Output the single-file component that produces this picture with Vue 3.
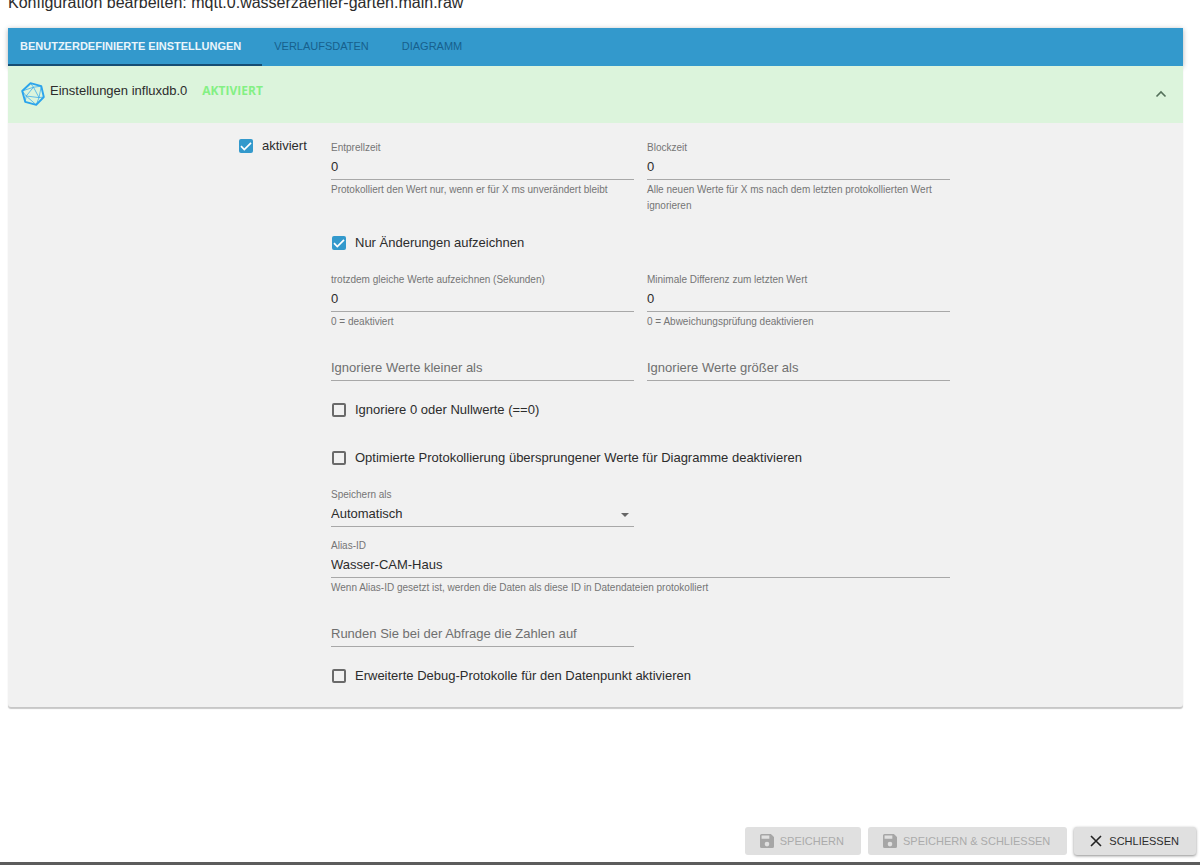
<script setup>
import { ref, reactive } from 'vue'

const tabs = ['Benutzerdefinierte Einstellungen', 'Verlaufsdaten', 'Diagramm']
const active = ref(0)
const cfg = reactive({
  enabled: true,
  debounce: '0',
  block: '0',
  changesOnly: true,
  relog: '0',
  minDiff: '0',
  below: '',
  above: '',
  ignoreZero: false,
  noSkipped: false,
  storage: 'Automatisch',
  alias: 'Wasser-CAM-Haus',
  round: '',
  debug: false,
})
</script>

<template>
  <div class="dialog">
    <header class="title"><h1>Konfiguration bearbeiten: mqtt.0.wasserzaehler-garten.main.raw</h1></header>

    <main class="content">
      <nav class="tabs" role="tablist">
        <button
          v-for="(t, i) in tabs"
          :key="t"
          type="button"
          role="tab"
          :aria-selected="active === i"
          :class="['tab', { active: active === i }]"
          @click="active = i"
        >{{ t }}</button>
      </nav>

      <section class="panel">
        <button type="button" class="summary" aria-expanded="true">
          <svg class="logo" viewBox="0 0 24 24" fill="none" stroke="#2ba4ec" stroke-linejoin="round">
            <path stroke-width="1.9" d="M9.5 1.2 20.3 4.2 22.8 15 15.2 22.8 4.2 19.8 1.2 9Z" />
            <path stroke-width="0.7" d="M12.5 5.2 18 15.6 5.2 14ZM12.5 5.2 9.5 1.2M12.5 5.2 20.3 4.2M12.5 5.2 1.2 9M18 15.6 20.3 4.2M18 15.6 22.8 15M18 15.6 15.2 22.8M5.2 14 1.2 9M5.2 14 4.2 19.8M5.2 14 15.2 22.8" />
          </svg>
          <span class="name">Einstellungen influxdb.0</span>
          <span class="state">AKTIVIERT</span>
          <svg class="chevron" viewBox="0 0 12 12" fill="none" stroke="#54705a" stroke-width="1.6">
            <path d="M1.5 8.5 6 4 10.5 8.5" />
          </svg>
        </button>

        <form class="form" @submit.prevent>
          <label class="check side"><input v-model="cfg.enabled" type="checkbox" /><span>aktiviert</span></label>

          <div class="fields">
            <div class="row first">
              <div class="field">
                <label for="debounce">Entprellzeit</label>
                <input id="debounce" v-model="cfg.debounce" type="text" />
                <p>Protokolliert den Wert nur, wenn er für X ms unverändert bleibt</p>
              </div>
              <div class="field">
                <label for="block">Blockzeit</label>
                <input id="block" v-model="cfg.block" type="text" />
                <p>Alle neuen Werte für X ms nach dem letzten protokollierten Wert ignorieren</p>
              </div>
            </div>

            <label class="check"><input v-model="cfg.changesOnly" type="checkbox" /><span>Nur Änderungen aufzeichnen</span></label>

            <div class="row">
              <div class="field">
                <label for="relog">trotzdem gleiche Werte aufzeichnen (Sekunden)</label>
                <input id="relog" v-model="cfg.relog" type="text" />
                <p>0 = deaktiviert</p>
              </div>
              <div class="field">
                <label for="mindiff">Minimale Differenz zum letzten Wert</label>
                <input id="mindiff" v-model="cfg.minDiff" type="text" />
                <p>0 = Abweichungsprüfung deaktivieren</p>
              </div>
            </div>

            <div class="row">
              <div class="field bare">
                <input v-model="cfg.below" type="text" placeholder="Ignoriere Werte kleiner als" aria-label="Ignoriere Werte kleiner als" />
              </div>
              <div class="field bare">
                <input v-model="cfg.above" type="text" placeholder="Ignoriere Werte größer als" aria-label="Ignoriere Werte größer als" />
              </div>
            </div>

            <label class="check"><input v-model="cfg.ignoreZero" type="checkbox" /><span>Ignoriere 0 oder Nullwerte (==0)</span></label>
            <label class="check"><input v-model="cfg.noSkipped" type="checkbox" /><span>Optimierte Protokollierung übersprungener Werte für Diagramme deaktivieren</span></label>

            <div class="row">
              <div class="field select">
                <label for="storage">Speichern als</label>
                <select id="storage" v-model="cfg.storage"><option>Automatisch</option></select>
                <svg class="arrow" viewBox="0 0 8 4" fill="#666"><path d="M0 0h8L4 4z" /></svg>
              </div>
            </div>

            <div class="row">
              <div class="field wide">
                <label for="alias">Alias-ID</label>
                <input id="alias" v-model="cfg.alias" type="text" />
                <p>Wenn Alias-ID gesetzt ist, werden die Daten als diese ID in Datendateien protokolliert</p>
              </div>
            </div>

            <div class="row">
              <div class="field bare">
                <input v-model="cfg.round" type="text" placeholder="Runden Sie bei der Abfrage die Zahlen auf" aria-label="Runden Sie bei der Abfrage die Zahlen auf" />
              </div>
            </div>

            <label class="check"><input v-model="cfg.debug" type="checkbox" /><span>Erweiterte Debug-Protokolle für den Datenpunkt aktivieren</span></label>
          </div>
        </form>
      </section>
    </main>

    <footer class="actions">
      <button v-for="t in ['Speichern', 'Speichern & Schliessen']" :key="t" type="button" class="btn" disabled>
        <svg viewBox="3 3 18 18" fill="#a6a6a6"><path d="M17 3H5a2 2 0 0 0-2 2v14a2 2 0 0 0 2 2h14a2 2 0 0 0 2-2V7l-4-4zm-5 16a3 3 0 1 1 0-6 3 3 0 0 1 0 6zm3-10H5V5h10v4z" /></svg>
        {{ t }}
      </button>
      <button type="button" class="btn close">
        <svg viewBox="0 0 14 14" fill="none" stroke="#222" stroke-width="1.6"><path d="M2 2 12 12M12 2 2 12" /></svg>
        Schliessen
      </button>
    </footer>
  </div>
</template>

<style>
body {
  margin: 0;
  background: #fff;
}
</style>

<style scoped>
.dialog {
  box-sizing: border-box;
  display: flex;
  flex-direction: column;
  min-height: 100vh;
  border-bottom: 3px solid #5c5c5c;
  font-family: "Liberation Sans", Arial, sans-serif;
  font-size: 13px;
  color: #2c2c2c;
}
.title {
  display: flex;
  align-items: flex-end;
  height: 12px;
  padding: 0 8px;
}
h1 {
  margin: 0;
  font-size: 16px;
  line-height: 18px;
  font-weight: 400;
}
button,
input,
select {
  font: inherit;
  color: inherit;
}
.content {
  flex: 1;
  margin: 16px 17px 0 8px;
}
.tabs {
  position: relative;
  display: flex;
  height: 38px;
  background: #3399cc;
  box-shadow: 0 1px 5px rgba(0, 0, 0, 0.3);
}
.tab {
  padding: 0 21px 0 12px;
  border: 0;
  border-bottom: 2px solid transparent;
  background: none;
  font-size: 11px;
  color: #17608c;
  text-transform: uppercase;
}
.tab.active {
  font-weight: 700;
  color: #e9f5fb;
  border-color: #164d73;
}
.panel {
  position: relative;
  background: #f1f1f1;
  border-radius: 0 0 3px 3px;
  box-shadow: 0 2px 1px rgba(0, 0, 0, 0.22);
}
.summary {
  box-sizing: border-box;
  display: flex;
  align-items: center;
  width: 100%;
  height: 57px;
  padding: 0 16px 2px 13px;
  border: 0;
  background: #dcf4dc;
  text-align: left;
}
.logo {
  width: 24px;
  height: 24px;
  margin-right: 5px;
}
.name,
.state {
  padding-bottom: 6px;
}
.state {
  margin-left: 15px;
  font-family: "Open Sans", sans-serif;
  font-size: 12px;
  line-height: 16px;
  font-weight: 700;
  color: #84f084;
}
.chevron {
  width: 12px;
  height: 12px;
  margin-left: auto;
}
.form {
  display: flex;
  justify-content: center;
  padding: 11px 16px 19px 13px;
}
.side {
  flex: 0 0 93px;
}
.fields {
  flex: 0 1 619px;
}
.check {
  display: flex;
  align-items: center;
  gap: 8px;
  height: 24px;
}
.check span {
  padding-bottom: 1px;
}
.check input {
  appearance: none;
  box-sizing: border-box;
  width: 14px;
  height: 14px;
  margin: 0 1px;
  border: 2px solid #6a6a6a;
  border-radius: 2px;
  background: transparent;
}
.check input:checked {
  border: 0;
  background: #3399cc url("data:image/svg+xml,%3Csvg xmlns='http://www.w3.org/2000/svg' viewBox='0 0 14 14' fill='none' stroke='white' stroke-width='1.7'%3E%3Cpath d='M2 7.2 5.3 10.5 12 3.8'/%3E%3C/svg%3E");
}
.fields .check {
  margin-top: 17px;
}
.fields .check + .check {
  margin-top: 24px;
}
.row {
  display: grid;
  grid-template-columns: 1fr 1fr;
  column-gap: 13px;
  margin-top: 12px;
}
.row.first {
  margin-top: 7px;
}
.check + .row {
  margin-top: 18px;
}
.field {
  position: relative;
  min-width: 0;
}
.field.wide {
  grid-column: 1 / -1;
}
.field.bare {
  padding-top: 14px;
}
.field label {
  display: block;
  font-size: 10px;
  line-height: 14px;
  color: #757575;
}
.field input,
.field select {
  appearance: none;
  display: block;
  box-sizing: border-box;
  width: 100%;
  height: 25px;
  margin: 0;
  padding: 0 0 2px;
  border: 0;
  border-bottom: 1px solid #a8a8a8;
  border-radius: 0;
  background: transparent;
}
.field input::placeholder {
  color: #6f6f6f;
  opacity: 1;
}
.field p {
  margin: 2px 0 0;
  font-size: 10px;
  line-height: 16px;
  color: #757575;
}
.arrow {
  position: absolute;
  right: 5px;
  bottom: 10px;
  width: 8px;
  height: 4px;
  pointer-events: none;
}
.actions {
  display: flex;
  justify-content: flex-end;
  gap: 7px;
  padding: 0 4px 7px;
}
.btn {
  display: flex;
  align-items: center;
  gap: 6px;
  height: 28px;
  padding: 0 17px 0 15px;
  border: 0;
  border-radius: 3px;
  background: #e0e0e0;
  font-size: 11px;
  color: #ababab;
  text-transform: uppercase;
}
.btn svg {
  width: 14px;
  height: 14px;
}
.btn.close {
  color: #2c2c2c;
  box-shadow: 0 1px 3px rgba(0, 0, 0, 0.45);
}
</style>
